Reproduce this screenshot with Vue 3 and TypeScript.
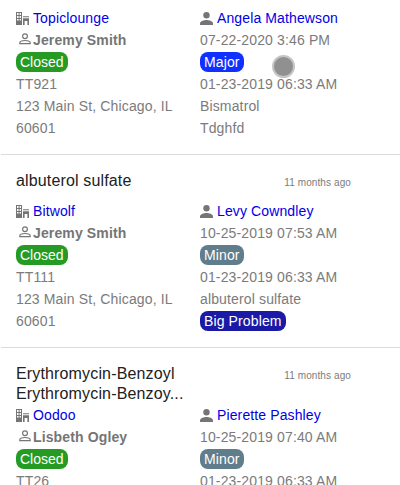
<script setup lang="ts">
interface Ticket {
  title: string
  age: string
  company: string
  owner: string
  contact: string
  opened: string
  severity: string
  code: string
  due: string
  product: string
  note: string
  flagged: boolean
  size: string
}

const tickets: Ticket[] = [
  { title: '', age: '', company: 'Topiclounge', owner: 'Jeremy Smith', contact: 'Angela Mathewson', opened: '07-22-2020 3:46 PM', severity: 'Major', code: 'TT921', due: '01-23-2019 06:33 AM', product: 'Bismatrol', note: 'Tdghfd', flagged: false, size: 'bare' },
  { title: 'albuterol sulfate', age: '11 months ago', company: 'Bitwolf', owner: 'Jeremy Smith', contact: 'Levy Cowndley', opened: '10-25-2019 07:53 AM', severity: 'Minor', code: 'TT111', due: '01-23-2019 06:33 AM', product: 'albuterol sulfate', note: 'Big Problem', flagged: true, size: 'single' },
  { title: 'Erythromycin-Benzoyl Erythromycin-Benzoy...', age: '11 months ago', company: 'Oodoo', owner: 'Lisbeth Ogley', contact: 'Pierette Pashley', opened: '10-25-2019 07:40 AM', severity: 'Minor', code: 'TT26', due: '01-23-2019 06:33 AM', product: '', note: '', flagged: false, size: 'double' },
]
</script>

<template>
  <main class="list">
    <article v-for="t in tickets" :key="t.code" class="card">
      <header v-if="t.title" class="head" :class="t.size">
        <h2 class="title">{{ t.title }}</h2>
        <span class="age">{{ t.age }}</span>
      </header>
      <div class="cols">
        <div class="col">
          <div class="row">
            <svg class="building" viewBox="0 0 13 13">
              <path fill="#757575" fill-rule="evenodd" d="M0 0h6v13H0zM1 1v2h1.6V1zM3.6 1v2H5V1zM1 4v2h1.6V4zM3.6 4v2H5V4zM1 7v1.5h1.6V7zM3.6 7v1.5H5V7z" />
              <path fill="#757575" d="M7 4.3h6v1H7zM7 6.3h6V13h-1.6V9H8.6v4H7z" />
            </svg>
            <a class="link">{{ t.company }}</a>
          </div>
          <div class="row">
            <svg class="outline" viewBox="0 0 12 12">
              <g fill="none" stroke="#757575" stroke-width="1.2">
                <circle cx="6" cy="3.2" r="2.4" />
                <path d="M.8 10.6V9.8C1 8.2 4 7.5 6 7.5s5 .7 5.2 2.3v.8z" />
              </g>
            </svg>
            <b class="owner">{{ t.owner }}</b>
          </div>
          <div class="row"><span class="badge closed">Closed</span></div>
          <div class="row">{{ t.code }}</div>
          <div v-if="t.note" class="row address">123 Main St, Chicago, IL 60601</div>
        </div>
        <div class="col">
          <div class="row">
            <svg class="person" viewBox="0 0 13 13">
              <circle cx="6.5" cy="3.2" r="3.2" fill="#757575" />
              <path fill="#757575" d="M0 13v-1.6C0 9.2 4.3 8 6.5 8S13 9.2 13 11.4V13z" />
            </svg>
            <a class="link">{{ t.contact }}</a>
          </div>
          <div class="row">{{ t.opened }}</div>
          <div class="row"><span class="badge" :class="t.severity.toLowerCase()">{{ t.severity }}</span></div>
          <div class="row">{{ t.due }}</div>
          <div v-if="t.product" class="row">{{ t.product }}</div>
          <div v-if="t.note" class="row"><span :class="{ badge: t.flagged, problem: t.flagged }">{{ t.note }}</span></div>
        </div>
      </div>
    </article>
    <span class="cursor"></span>
  </main>
</template>

<style>
body { background: #fff; }
</style>

<style scoped>
.list {
  position: relative;
  box-sizing: border-box;
  height: 485px;
  padding: 7px 0 0 1px;
  overflow: hidden;
  font: 14px/22px "Liberation Sans", Arial, sans-serif;
  letter-spacing: 0.14px;
  color: #7b7b7b;
}
.card { border-bottom: 1px solid #dcdcdc; padding: 0 0 15px 15px; }
.head { display: flex; box-sizing: border-box; justify-content: space-between; padding-right: 49px; }
.single { height: 45px; padding-top: 16px; }
.double { height: 56px; padding-top: 16px; }
.title { width: 180px; margin: 0; font-size: 16px; font-weight: 400; line-height: 20px; letter-spacing: 0.15px; color: #212121; }
.age { padding-top: 1px; font-size: 10px; line-height: 22px; letter-spacing: 0.1px; }
.cols { display: grid; grid-template-columns: 184px 1fr; }
.row { display: flex; align-items: center; min-height: 22px; white-space: nowrap; }
.address { width: 165px; white-space: normal; }
.link { color: #0000e6; letter-spacing: 0.12px; }
.owner { letter-spacing: 0.13px; color: #757575; }
.badge { height: 20px; padding: 0 4px; border-radius: 8px; line-height: 20px; letter-spacing: 0.12px; color: #fff; }
.closed { background: #259b24; letter-spacing: 0; }
.major { background: #1030ff; }
.minor { background: #607d8b; }
.problem { background: #1a1aa6; }
.building, .person { width: 13px; height: 13px; margin-right: 4px; flex: none; }
.outline { width: 12px; height: 12px; margin: -3px 2px 0 3px; flex: none; }
.cursor { position: absolute; left: 272px; top: 55px; box-sizing: border-box; width: 23px; height: 23px; border: 2px solid #c5c5c5; border-radius: 50%; background: #909090; }
</style>
